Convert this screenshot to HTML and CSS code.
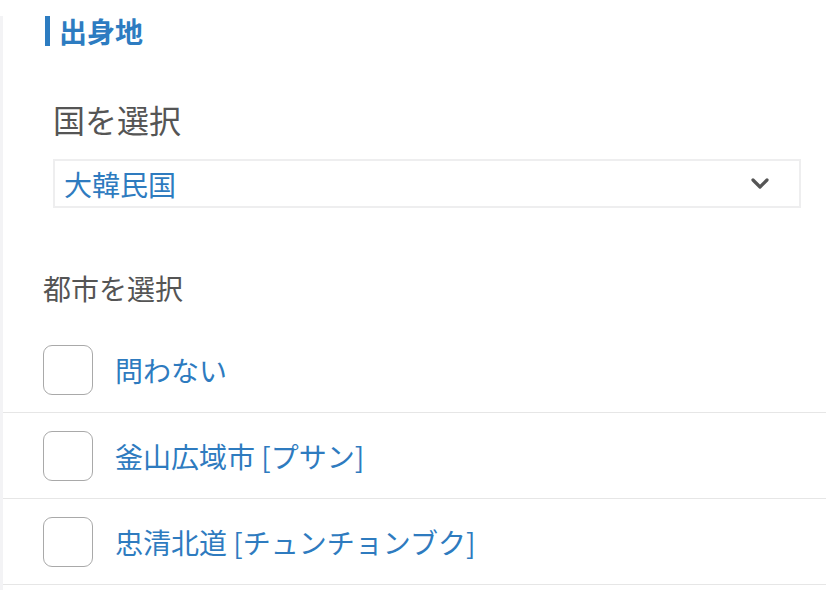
FILE: index.html
```html
<!DOCTYPE html>
<html lang="ja">
<head>
<meta charset="utf-8">
<link rel="stylesheet" href="styles.css">
</head>
<body>
<div class="page">
  <h2 class="section-title">出身地</h2>
  <div class="country">
    <div class="field-label">国を選択</div>
    <div class="select">
      <span class="select-value">大韓民国</span>
      <svg class="chevron" width="18" height="12" viewBox="0 0 18 12"><polyline points="2,2 9,9 16,2" fill="none" stroke="#555" stroke-width="3.2" stroke-linecap="round" stroke-linejoin="round"/></svg>
    </div>
  </div>
  <div class="city-label">都市を選択</div>
  <ul class="city-list">
    <li class="city-row"><span class="checkbox"></span><span class="city-name">問わない</span></li>
    <li class="city-row"><span class="checkbox"></span><span class="city-name">釜山広域市 [プサン]</span></li>
    <li class="city-row"><span class="checkbox"></span><span class="city-name">忠清北道 [チュンチョンブク]</span></li>
  </ul>
</div>
</body>
</html>
```

FILE: styles.css
```css
* { box-sizing: border-box; }
html, body {
  margin: 0;
  padding: 0;
  background: #fff;
}
body {
  font-family: "Noto Sans CJK JP", "Noto Sans", sans-serif;
  overflow: hidden;
}
.page {
  border-left: 3px solid #f3f3f5;
  min-height: 590px;
}
.section-title {
  margin: 16px 0 0 42px;
  padding-left: 9px;
  border-left: 5px solid #2d7cc1;
  font-size: 28px;
  font-weight: 700;
  line-height: 30px;
  color: #2d7cc1;
}
.country {
  padding: 0 25px 0 50px;
}
.field-label {
  margin-top: 55px;
  font-size: 32px;
  line-height: 36px;
  color: #555;
}
.select {
  margin-top: 22px;
  width: 748px;
  height: 49px;
  border: 2px solid #eeeeef;
  display: flex;
  align-items: center;
  justify-content: space-between;
  padding: 0 30px 0 9px;
}
.select-value {
  font-size: 28px;
  line-height: 32px;
  color: #2e7bbf;
}
.chevron { display: block; }
.city-label {
  margin: 64px 0 0 40px;
  font-size: 28px;
  line-height: 32px;
  color: #555;
}
.city-list {
  list-style: none;
  margin: 23px 0 0;
  padding: 0;
}
.city-row {
  display: flex;
  align-items: center;
  gap: 22px;
  padding: 18px 0 17px 40px;
  border-bottom: 1px solid #e6e6e6;
}
.checkbox {
  width: 50px;
  height: 50px;
  border: 1px solid #a9a9a9;
  border-radius: 9px;
  flex: none;
}
.city-name {
  font-size: 28px;
  line-height: 32px;
  color: #2e7bbf;
}
```
